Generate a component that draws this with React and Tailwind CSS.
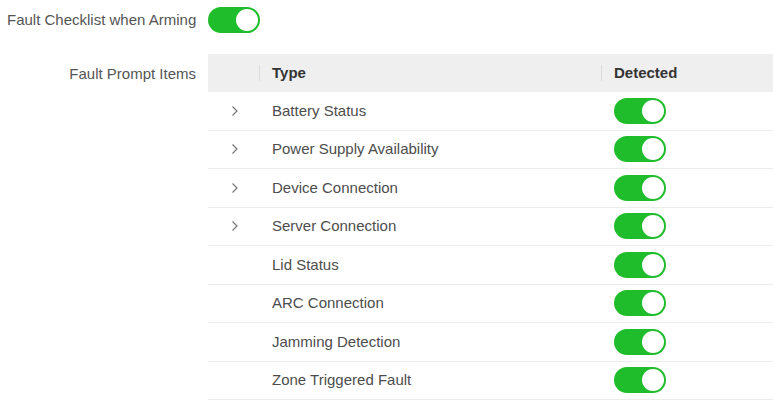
const rows = [
  { name: 'Battery Status', expand: true },
  { name: 'Power Supply Availability', expand: true },
  { name: 'Device Connection', expand: true },
  { name: 'Server Connection', expand: true },
  { name: 'Lid Status' },
  { name: 'ARC Connection' },
  { name: 'Jamming Detection' },
  { name: 'Zone Triggered Fault' },
]

function Toggle() {
  return (
    <div className="flex h-[26px] w-[52px] items-center justify-end rounded-full bg-[#1fbc2b] px-[2px]">
      <div className="h-[22px] w-[22px] rounded-full bg-white" />
    </div>
  )
}

function Chevron() {
  return (
    <svg width="8" height="12" viewBox="0 0 8 12" fill="none">
      <path d="M1.5 1.5L6 6L1.5 10.5" stroke="#777" strokeWidth="1.2" />
    </svg>
  )
}

export default function App() {
  return (
    <div className="h-[401px] w-[773px] bg-white text-[15px] text-[#4d4d4d]" style={{ fontFamily: '"Liberation Sans", Arial, sans-serif' }}>
      <div className="flex h-[41px] items-center pb-[1px]">
        <span className="w-[208px] pl-[7px] text-[#555]">Fault Checklist when Arming</span>
        <Toggle />
      </div>
      <div className="mt-[13px] flex">
        <div className="w-[196px] pt-[9px] text-right text-[#555]">Fault Prompt Items</div>
        <div className="ml-[12px] flex-1">
          <div className="flex h-[38px] items-center bg-[#efefef] font-bold text-[#333]">
            <div className="flex h-full w-[52px] items-center justify-end">
              <div className="h-[16px] w-px bg-[#dcdcdc]" />
            </div>
            <div className="w-[341px] pl-[12px]">Type</div>
            <div className="h-[16px] w-px bg-[#dcdcdc]" />
            <div className="pl-[12px]">Detected</div>
          </div>
          {rows.map((r) => (
            <div key={r.name} className="flex h-[38.5px] items-center border-b border-[#ececec]">
              <div className="flex w-[52px] justify-center pl-[1px]">{r.expand ? <Chevron /> : null}</div>
              <div className="w-[342px] pl-[12px]">{r.name}</div>
              <div className="pl-[12px]">
                <Toggle />
              </div>
            </div>
          ))}
        </div>
      </div>
    </div>
  )
}
